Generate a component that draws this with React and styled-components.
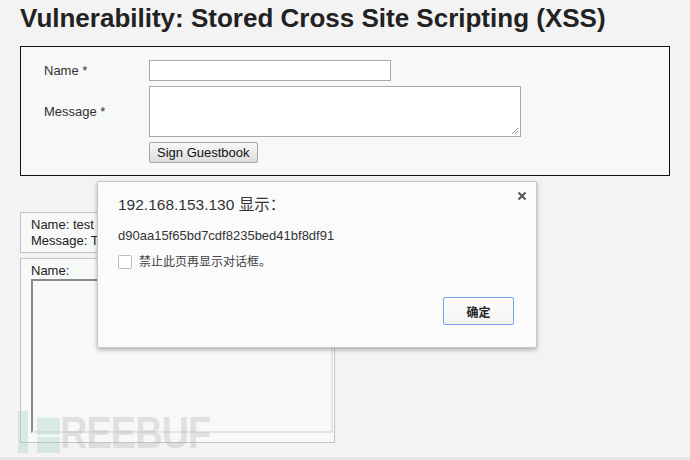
import React from "react";
import styled, { createGlobalStyle } from "styled-components";

const GlobalStyle = createGlobalStyle`
  html, body { margin: 0; padding: 0; }
  body {
    background: #f3f3f3;
    font-family: "Liberation Sans", Arial, "Noto Sans CJK SC", sans-serif;
    color: #222;
  }
`;

const Screen = styled.div`
  position: relative;
  width: 690px;
  height: 460px;
  overflow: hidden;
  display: flex;
  flex-direction: column;
`;

const Main = styled.div`
  flex: 1;
  padding: 3px 20px 0 20px;
  display: flex;
  flex-direction: column;
  align-items: flex-start;
`;

const Footer = styled.div`
  height: 3px;
  background: #e6e6e6;
`;

const Title = styled.h1`
  margin: 0;
  font-size: 26px;
  line-height: 30px;
  font-weight: bold;
  color: #222;
  white-space: nowrap;
`;

const FormBox = styled.div`
  margin-top: 13px;
  box-sizing: border-box;
  width: 650px;
  height: 130px;
  border: 1px solid #111;
  background: #f7f8f8;
  padding: 13px 0 0 23px;
  display: grid;
  grid-template-columns: 105px auto;
  align-content: start;
  row-gap: 5px;
  align-items: center;
  justify-items: start;
`;

const Label = styled.label`
  font-size: 13px;
  color: #333;
`;

const TextInput = styled.div`
  box-sizing: border-box;
  width: 242px;
  height: 21px;
  border: 1px solid #a9a9a9;
  background: #fff;
`;

const TextArea = styled.div`
  position: relative;
  box-sizing: border-box;
  width: 372px;
  height: 51px;
  border: 1px solid #a9a9a9;
  background: #fff;
`;

const Grip = styled.svg`
  position: absolute;
  right: 1px;
  bottom: 1px;
`;

const Button = styled.div`
  grid-column: 2;
  box-sizing: border-box;
  height: 21px;
  padding: 0 7px;
  display: flex;
  align-items: center;
  font-size: 13px;
  color: #111;
  border: 1px solid #a6a6a6;
  border-radius: 2px;
  background: linear-gradient(#f8f8f8, #dddddd);
`;

const Entry = styled.div`
  box-sizing: border-box;
  width: 315px;
  margin-top: ${(p) => p.$gap}px;
  border: 1px solid #c4c4c4;
  background: #f7f8f8;
  padding: 4px 0 ${(p) => p.$pb}px 10px;
  display: flex;
  flex-direction: column;
  font-size: 13px;
  line-height: 16px;
  color: #222;
  white-space: nowrap;
`;

const Frame = styled.div`
  box-sizing: border-box;
  width: 302px;
  height: 154px;
  border-style: solid;
  border-width: 2px;
  border-color: #8a8a8a #e4e4e4 #e4e4e4 #8a8a8a;
  background: #f7f8f8;
`;

const Dialog = styled.div`
  position: absolute;
  left: 97px;
  top: 181px;
  box-sizing: border-box;
  width: 440px;
  height: 167px;
  background: #fbfbfb;
  border: 1px solid #c6c6c6;
  border-radius: 2px;
  box-shadow: 0 2px 4px rgba(0, 0, 0, 0.28);
  padding: 13px 22px 22px 20px;
  display: flex;
  flex-direction: column;
  font-family: "Liberation Sans", Arial, "Noto Sans CJK SC", sans-serif;
`;

const Close = styled.div`
  position: absolute;
  right: 8px;
  top: 8px;
  width: 12px;
  height: 12px;
  display: flex;
  align-items: center;
  justify-content: center;
`;

const DialogTitle = styled.div`
  font-size: 15.5px;
  line-height: 20px;
  color: #333;
`;

const Hash = styled.div`
  margin-top: 13px;
  font-size: 13px;
  line-height: 16px;
  color: #333;
`;

const CheckRow = styled.div`
  margin-top: 11px;
  display: flex;
  align-items: center;
  gap: 7px;
  font-size: 12px;
  line-height: 14px;
  color: #444;
`;

const Check = styled.span`
  box-sizing: border-box;
  width: 14px;
  height: 14px;
  border: 1px solid #bdbdbd;
  border-radius: 2px;
  background: #fff;
`;

const Actions = styled.div`
  margin-top: auto;
  display: flex;
  justify-content: flex-end;
`;

const OkButton = styled.div`
  box-sizing: border-box;
  width: 71px;
  height: 28px;
  display: flex;
  align-items: center;
  justify-content: center;
  border: 1px solid #74a3ee;
  border-radius: 2px;
  background: linear-gradient(#fdfdfd, #f3f3f3);
  font-size: 12px;
  font-weight: bold;
  color: #222;
`;

const Watermark = styled.div`
  position: absolute;
  left: 18px;
  top: 411px;
  display: flex;
  align-items: flex-start;
  pointer-events: none;
`;

const WmBar = styled.div`
  width: 10px;
  height: 42px;
  background: rgba(163, 206, 190, 0.35);
`;

const WmBlocks = styled.div`
  margin: 7px 0 0 9px;
  display: flex;
  flex-direction: column;
  gap: 2px;
`;

const WmBlock = styled.div`
  width: 23px;
  height: ${(p) => p.$h}px;
  background: rgba(163, 206, 190, 0.35);
`;

const WmText = styled.div`
  margin: 0;
  font-family: "Liberation Sans", Arial, sans-serif;
  font-weight: bold;
  font-size: 45px;
  line-height: 44px;
  color: rgba(185, 185, 185, 0.4);
  transform: scaleX(0.84);
  transform-origin: left top;
  letter-spacing: -1px;
`;

export default function App() {
  return (
    <>
      <GlobalStyle />
      <Screen>
        <Main>
          <Title>Vulnerability: Stored Cross Site Scripting (XSS)</Title>
          <FormBox>
            <Label>Name *</Label>
            <TextInput />
            <Label>Message *</Label>
            <TextArea>
              <Grip width="8" height="8" viewBox="0 0 8 8">
                <path d="M7 1 L1 7 M7 4 L4 7" stroke="#999" strokeWidth="1" />
              </Grip>
            </TextArea>
            <Button>Sign Guestbook</Button>
          </FormBox>
          <Entry $gap={36} $pb={3}>
            <span>Name: test</span>
            <span>Message: Test</span>
          </Entry>
          <Entry $gap={5} $pb={9}>
            <span>Name:</span>
            <Frame />
          </Entry>
        </Main>
        <Footer />
        <Watermark>
          <WmBar />
          <WmBlocks>
            <WmBlock $h={17} />
            <WmBlock $h={16} />
          </WmBlocks>
          <WmText>REEBUF</WmText>
        </Watermark>
        <Dialog>
          <Close>
            <svg width="10" height="10" viewBox="0 0 10 10">
              <path d="M1.5 1.5 L8.5 8.5 M8.5 1.5 L1.5 8.5" stroke="#555" strokeWidth="2" />
            </svg>
          </Close>
          <DialogTitle>192.168.153.130 显示：</DialogTitle>
          <Hash>d90aa15f65bd7cdf8235bed41bf8df91</Hash>
          <CheckRow>
            <Check />
            禁止此页再显示对话框。
          </CheckRow>
          <Actions>
            <OkButton>确定</OkButton>
          </Actions>
        </Dialog>
      </Screen>
    </>
  );
}
